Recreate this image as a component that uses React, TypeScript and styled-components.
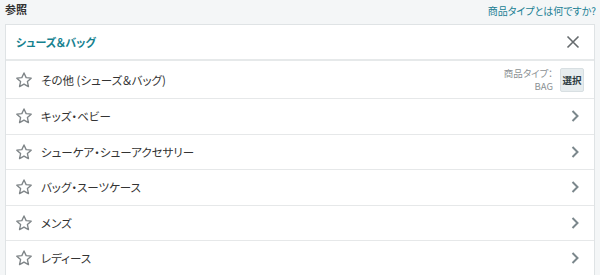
import * as React from 'react';
import styled, { createGlobalStyle } from 'styled-components';

const GlobalStyle = createGlobalStyle`
  html, body {
    margin: 0;
    padding: 0;
    background: #f4f6f7;
  }
  body {
    font-family: "Noto Sans CJK JP", "Liberation Sans", sans-serif;
    font-feature-settings: "palt";
    color: #333333;
  }
`

type Category = {
    name: string,
    productType?: string,
}

const categories: Category[] = [
    { name: 'その他 (シューズ＆バッグ)', productType: 'BAG' },
    { name: 'キッズ・ベビー' },
    { name: 'シューケア・シューアクセサリー' },
    { name: 'バッグ・スーツケース' },
    { name: 'メンズ' },
    { name: 'レディース' },
]

const StarIcon = () => (
    <svg width="18" height="18" viewBox="0 0 24 24">
        <path
            d="M12 2.6l2.85 6.2 6.75.75-5.05 4.6 1.4 6.65L12 17.4l-5.95 3.4 1.4-6.65-5.05-4.6 6.75-.75z"
            fill="none"
            stroke="#7f8588"
            strokeWidth="1.8"
            strokeLinejoin="round"
        />
    </svg>
)

const ChevronIcon = () => (
    <svg width="10" height="14" viewBox="0 0 10 14">
        <path d="M2.5 2l5 5-5 5" fill="none" stroke="#7b878c" strokeWidth="2" />
    </svg>
)

const CloseIcon = () => (
    <svg width="14" height="14" viewBox="0 0 14 14">
        <path d="M1.5 1.5l11 11M12.5 1.5l-11 11" fill="none" stroke="#666b6e" strokeWidth="1.6" />
    </svg>
)

const App: React.FC = () => {
    return (
        <>
            <GlobalStyle />
            <Page>
                <TopBar>
                    <Heading>参照</Heading>
                    <HelpLink>商品タイプとは何ですか?</HelpLink>
                </TopBar>
                <Panel>
                    <PanelHeader>
                        <PanelTitle>シューズ＆バッグ</PanelTitle>
                        <IconButton><CloseIcon /></IconButton>
                    </PanelHeader>
                    {
                        categories.map((item, index) => {
                            return (
                                <Row key={item.name} first={index == 0}>
                                    <StarWrap><StarIcon /></StarWrap>
                                    <RowName>{item.name}</RowName>
                                    {
                                        item.productType ? (
                                            <TypeBox>
                                                <TypeLabel>
                                                    <span>商品タイプ：</span>
                                                    <span>{item.productType}</span>
                                                </TypeLabel>
                                                <SelectButton>選択</SelectButton>
                                            </TypeBox>
                                        ) : (
                                            <ChevronWrap><ChevronIcon /></ChevronWrap>
                                        )
                                    }
                                </Row>
                            )
                        })
                    }
                </Panel>
            </Page>
        </>
    )
}

export default App;

const Page = styled.div`
    width: 600px;
    height: 275px;
    overflow: hidden;
`

const TopBar = styled.div`
    height: 24px;
    padding: 2px 4px 0 5px;
    box-sizing: border-box;
    display: flex;
    align-items: flex-start;
    justify-content: space-between;
`

const Heading = styled.div`
    font-size: 11px;
    line-height: 14px;
    font-weight: bold;
    color: #333333;
`

const HelpLink = styled.a`
    font-size: 10px;
    line-height: 14px;
    margin-top: 2px;
    color: #1a7f94;
    cursor: pointer;
`

const Panel = styled.div`
    margin: 0 5px;
    background: #ffffff;
    border: 1px solid #dfe3e5;
    border-bottom: none;
    display: flex;
    flex-direction: column;
`

const PanelHeader = styled.div`
    height: 34px;
    flex-shrink: 0;
    padding: 0 14px 0 10px;
    display: flex;
    align-items: center;
    justify-content: space-between;
    border-bottom: 2px solid #e6e9ea;
`

const PanelTitle = styled.div`
    font-size: 11px;
    font-weight: bold;
    color: #16818f;
`

const IconButton = styled.div`
    display: flex;
    align-items: center;
    justify-content: center;
`

const Row = styled.div<{first: boolean}>`
    height: ${props => props.first ? '37px' : '34.5px'};
    flex-shrink: 0;
    padding: 0 14px 0 9px;
    display: flex;
    align-items: center;
    border-bottom: 1px solid #e6e8e9;
`

const StarWrap = styled.div`
    width: 18px;
    height: 18px;
    margin-right: 8px;
    display: flex;
`

const RowName = styled.div`
    flex: 1;
    font-size: 11.5px;
    color: #333333;
`

const ChevronWrap = styled.div`
    display: flex;
    align-items: center;
`

const TypeBox = styled.div`
    display: flex;
    align-items: center;
    gap: 7px;
    margin-right: -4px;
`

const TypeLabel = styled.div`
    display: flex;
    flex-direction: column;
    align-items: flex-end;
    font-size: 9.5px;
    line-height: 13px;
    color: #8c9194;
`

const SelectButton = styled.div`
    width: 22px;
    height: 22px;
    display: flex;
    align-items: center;
    justify-content: center;
    font-size: 9.5px;
    font-weight: bold;
    color: #2c3a40;
    background: #e6ecee;
    border: 1px solid #d8dfe2;
    border-radius: 2px;
`
